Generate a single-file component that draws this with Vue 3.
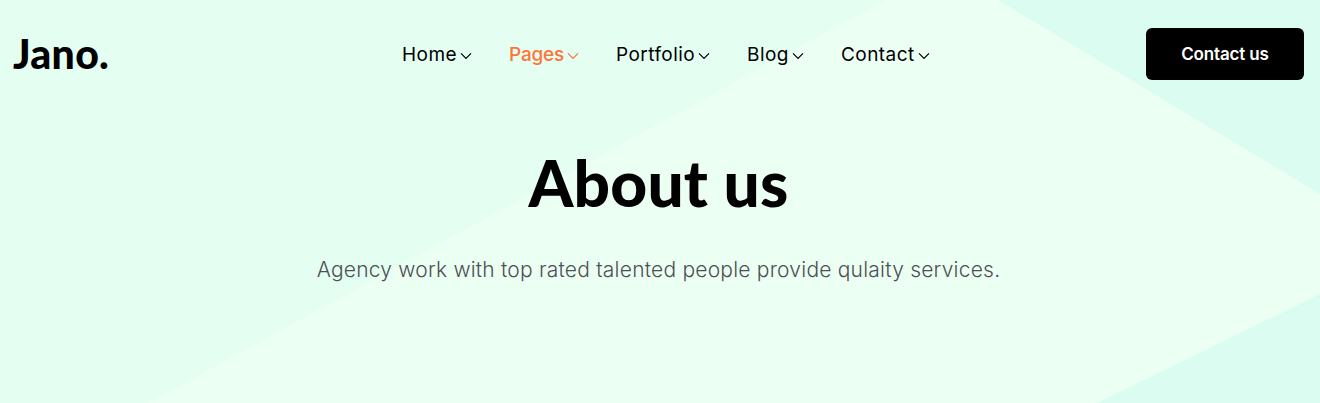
<script setup>
const links = [
  { label: 'Home', key: 'home' },
  { label: 'Pages', key: 'pages', active: true },
  { label: 'Portfolio', key: 'portfolio' },
  { label: 'Blog', key: 'blog' },
  { label: 'Contact', key: 'contact' },
]
</script>

<template>
  <div class="hero">
    <svg class="backdrop" viewBox="0 0 1320 403" preserveAspectRatio="none" aria-hidden="true">
      <polygon points="885,0 998,0 1320,194 1320,294 1097,403 148,403" fill="#ecfff3" />
      <polygon points="998,0 1320,0 1320,194" fill="#dbfcf0" />
      <polygon points="1320,294 1320,403 1097,403" fill="#dbfcf0" />
    </svg>
    <header class="bar">
      <a class="logo">Jano.</a>
      <nav class="nav">
        <a v-for="l in links" :key="l.key" class="link" :class="[l.key, { active: l.active }]">
          <span class="label">{{ l.label }}</span>
          <svg class="chevron" viewBox="0 0 12 8" width="12" height="8">
            <path d="M1 1.3 L6 6.3 L11 1.3" fill="none" stroke="currentColor" stroke-width="1.2" />
          </svg>
        </a>
      </nav>
      <button class="cta">Contact us</button>
    </header>
    <main class="intro">
      <h1 class="title">About us</h1>
      <p class="sub">Agency work with top rated talented people provide qulaity services.</p>
    </main>
  </div>
</template>

<style>
body {
  margin: 0;
}
</style>

<style scoped>
.hero {
  position: relative;
  height: 403px;
  overflow: hidden;
  background: #e4fef1;
  font-family: Inter, sans-serif;
  color: #000;
}
.backdrop {
  position: absolute;
  inset: 0;
  width: 100%;
  height: 100%;
}
.bar {
  position: relative;
  display: grid;
  grid-template-columns: 389px 1fr 158px;
  align-items: center;
  height: 52px;
  padding: 28px 16px 0 13px;
}
.logo {
  font-family: Lato, sans-serif;
  font-size: 41px;
  font-weight: 900;
  line-height: 50px;
  letter-spacing: 0.3px;
}
.nav {
  display: flex;
}
.link {
  display: flex;
  align-items: center;
  gap: 3px;
  font-size: 19px;
  line-height: 52px;
  letter-spacing: 0.45px;
  white-space: nowrap;
}
.label {
  padding-top: 2px;
  line-height: 50px;
}
.home,
.pages {
  width: 107px;
}
.portfolio {
  width: 131px;
}
.blog {
  width: 94px;
}
.active {
  color: #ff7439;
  font-weight: 500;
  letter-spacing: -0.2px;
}
.chevron {
  margin-top: 4px;
}
.cta {
  height: 52px;
  padding: 0;
  border: 0;
  border-radius: 6px;
  background: #000;
  color: #fff;
  font-family: Inter, sans-serif;
  font-size: 17px;
  font-weight: 600;
  letter-spacing: -0.15px;
}
.intro {
  position: relative;
  display: flex;
  flex-direction: column;
  align-items: center;
  padding-right: 3px;
}
.title {
  margin: 63px 0 0;
  font-family: Lato, sans-serif;
  font-size: 64px;
  font-weight: 900;
  line-height: 80px;
  letter-spacing: 0.2px;
}
.sub {
  margin: 31px 0 0;
  font-size: 21px;
  font-weight: 300;
  line-height: 32px;
  letter-spacing: 0.22px;
  color: #4c5054;
  white-space: nowrap;
}
</style>
